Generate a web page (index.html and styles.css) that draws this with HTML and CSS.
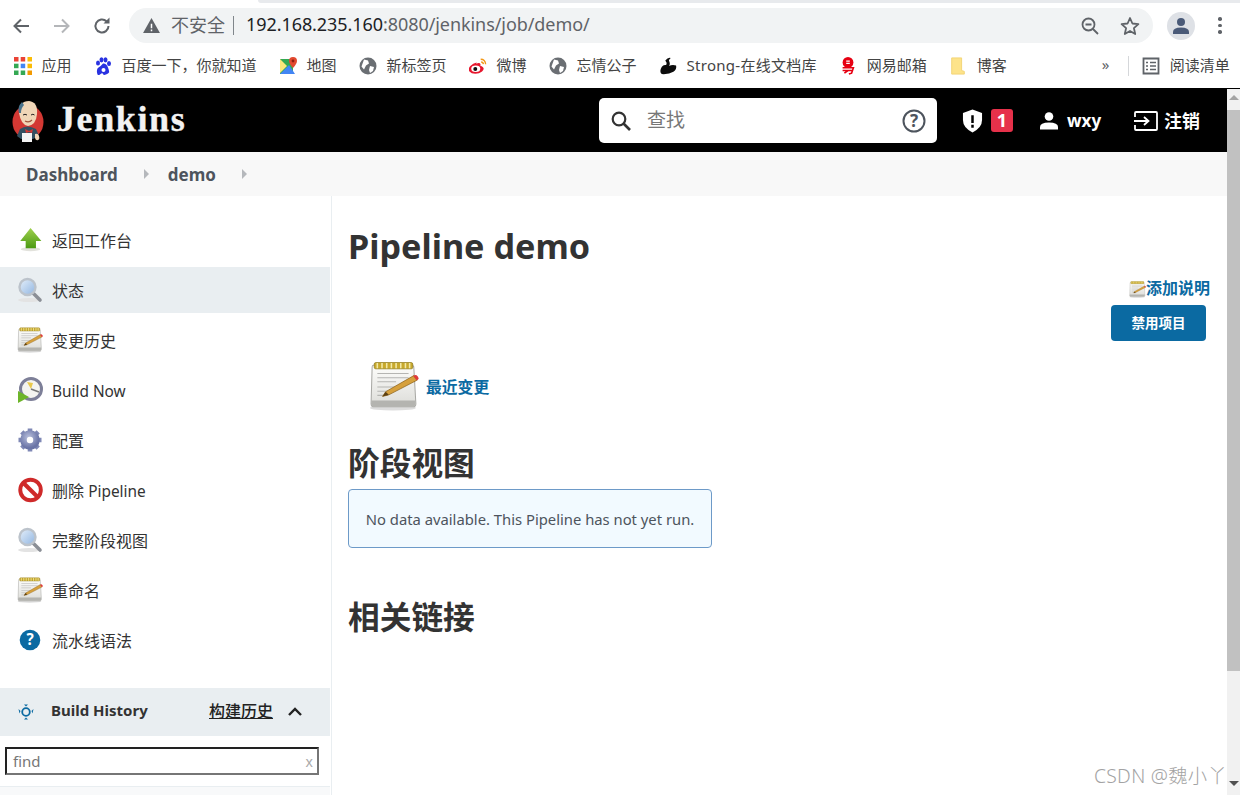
FILE: index.html
```html
<!DOCTYPE html>
<html lang="zh">
<head>
<meta charset="utf-8">
<title>demo [Jenkins]</title>
<link rel="stylesheet" href="styles.css">
</head>
<body>
<svg class="sprite" width="0" height="0" aria-hidden="true">
  <defs>
    <linearGradient id="paper" x1="0" y1="0" x2="0" y2="1"><stop offset="0" stop-color="#fdfdfb"/><stop offset="1" stop-color="#dcdcd8"/></linearGradient>
    <linearGradient id="lens" x1="0" y1="0" x2="1" y2="1"><stop offset="0" stop-color="#e6f0fb"/><stop offset="1" stop-color="#8fb4e0"/></linearGradient>
    <linearGradient id="green" x1="0" y1="0" x2="0" y2="1"><stop offset="0" stop-color="#9fd04e"/><stop offset="1" stop-color="#4b9a12"/></linearGradient>
    <radialGradient id="gear" cx=".4" cy=".3" r=".8"><stop offset="0" stop-color="#b9c0dd"/><stop offset="1" stop-color="#6a74a6"/></radialGradient>
    <symbol id="i-note" viewBox="0 0 48 48">
      <ellipse cx="23" cy="45" rx="22" ry="2.4" fill="#ddd"/>
      <path d="M4 4h37q2 0 2 2l2 35q0 3-3 3H5q-3 0-3-3L3 6q0-2 1-2z" fill="url(#paper)" stroke="#a9a9a5" stroke-width="1"/>
      <path d="M2.5 38h42v3q0 3-3 3H5q-3 0-3-3z" fill="#b4b4b0"/>
      <rect x="5" y="1.500" width="37" height="6" rx="1.500" fill="#c8a92c" stroke="#8f7a1c" stroke-width=".7"/>
      <path d="M8 2v5M12.500 2v5M17 2v5M21.500 2v5M26 2v5M30.500 2v5M35 2v5M39 2v5" stroke="#f2e9a8" stroke-width="1.500"/>
      <path d="M8 12h30M8 16h30M8 20h18M8 25h20M8 29h14M8 33h10" stroke="#b5b5b2" stroke-width="1"/>
      <path d="M13 34l3-4.500L43 14l3 4.500-27 14z" fill="#d6a03c" stroke="#8b6017" stroke-width=".7"/>
      <path d="M42.500 14.300q2.500-1.800 4.300.5t-.800 4z" fill="#df3a3a"/>
      <path d="M13 34l3-4.500 3 3z" fill="#5b3f12"/>
    </symbol>
    <symbol id="i-search" viewBox="0 0 26 26">
      <ellipse cx="12" cy="23" rx="11" ry="2" fill="#e3e3e3"/>
      <path d="M16 16l7 7" stroke="#8b8f96" stroke-width="3.600" stroke-linecap="round"/>
      <circle cx="10.500" cy="10" r="8" fill="url(#lens)" stroke="#bcc3cb" stroke-width="2.400"/>
    </symbol>
    <symbol id="i-pw" viewBox="0 0 24 24">
      <ellipse cx="12.500" cy="20.500" rx="9" ry="1.800" fill="#e2e2dc"/>
      <path d="M12.500 1L22.500 13H17.500V19.500H8V13H3z" fill="url(#green)"/>
    </symbol>
    <symbol id="i-globe" viewBox="0 0 18 18">
      <circle cx="9" cy="9" r="8.500" fill="#6a6e73"/>
      <path d="M5 2.500l4 1 1 3-3 2-2 4-2.500-3zM11 9l4 1-1 4-3 2-1-3z" fill="#fff"/>
    </symbol>
  </defs>
</svg>

<div class="page">
  <header class="browser">
    <div class="tabstrip"></div>
    <div class="toolbar">
      <svg class="tool" viewBox="0 0 18 18"><path d="M17 9H3M9 2.500L2.500 9 9 15.500" fill="none" stroke="#5f6368" stroke-width="2"/></svg>
      <svg class="tool tool-off" viewBox="0 0 18 18"><path d="M1 9h14M9 2.500L15.500 9 9 15.500" fill="none" stroke="#b4b6b9" stroke-width="2"/></svg>
      <svg class="tool" viewBox="0 0 18 18"><path d="M15.500 9a6.500 6.500 0 1 1-2-4.700" fill="none" stroke="#5f6368" stroke-width="2"/><path d="M10.500 6.500H16.500V.5z" fill="#5f6368"/></svg>
      <div class="omnibox">
        <svg class="warn" viewBox="0 0 18 16"><path d="M9 0L18 16H0z" fill="#5f6368"/><path d="M9 6v5M9 12.300v1.700" stroke="#fff" stroke-width="1.600"/></svg>
        <span class="insecure">不安全</span>
        <span class="pipe"></span>
        <span class="url"><b>192.168.235.160</b>:8080/jenkins/job/demo/</span>
        <svg class="omni-zoom" viewBox="0 0 18 18"><circle cx="7.500" cy="7.500" r="6" fill="none" stroke="#5f6368" stroke-width="1.800"/><path d="M12 12l5 5M4.500 7.500h6" stroke="#5f6368" stroke-width="1.800"/></svg>
        <svg class="omni-star" viewBox="0 0 20 20"><path d="M10 2l2.400 5.500 6 .6-4.500 4 1.300 5.900L10 15l-5.200 3 1.300-5.900-4.500-4 6-.6z" fill="none" stroke="#5f6368" stroke-width="1.800" stroke-linejoin="round"/></svg>
      </div>
      <div class="avatar"><svg viewBox="0 0 18 18" width="18" height="18"><circle cx="9" cy="5" r="4" fill="#4a5a78"/><path d="M1 17v-2q0-4.500 8-4.500t8 4.500v2z" fill="#4a5a78"/></svg></div>
      <div class="kebab"><i></i><i></i><i></i></div>
    </div>
    <nav class="bookmarks">
      <a class="bm"><svg class="bm-i" viewBox="0 0 18 18"><g><rect x="0" y="0" width="4.500" height="4.500" fill="#ea4335"/><rect x="6.700" y="0" width="4.500" height="4.500" fill="#ea4335"/><rect x="13.500" y="0" width="4.500" height="4.500" fill="#fbbc05"/><rect x="0" y="6.700" width="4.500" height="4.500" fill="#34a853"/><rect x="6.700" y="6.700" width="4.500" height="4.500" fill="#4285f4"/><rect x="13.500" y="6.700" width="4.500" height="4.500" fill="#fbbc05"/><rect x="0" y="13.500" width="4.500" height="4.500" fill="#34a853"/><rect x="6.700" y="13.500" width="4.500" height="4.500" fill="#34a853"/><rect x="13.500" y="13.500" width="4.500" height="4.500" fill="#f29900"/></g></svg><span>应用</span></a>
      <a class="bm"><svg class="bm-i" viewBox="0 0 18 18"><g fill="#2932e1"><ellipse cx="4" cy="6" rx="2" ry="2.600"/><ellipse cx="7.500" cy="2.800" rx="2" ry="2.600"/><ellipse cx="11.500" cy="2.800" rx="2" ry="2.600"/><ellipse cx="15" cy="6.500" rx="2" ry="2.600"/><path d="M9.500 6.500q3 0 4.500 4t1 5-3 2-3-.5-3 .5-3-2 1.500-5 4.500-4z"/></g><circle cx="9.500" cy="13" r="2" fill="#fff"/></svg><span>百度一下，你就知道</span></a>
      <a class="bm"><svg class="bm-i" viewBox="0 0 18 18"><path d="M1 2h13v15H1z" fill="#34a853"/><path d="M1 17L10 8l6 9z" fill="#4285f4"/><path d="M1 2l7 7-7 7z" fill="#fbe67a"/><path d="M14 0a4 4 0 0 1 4 4q0 2.500-4 7-4-4.500-4-7a4 4 0 0 1 4-4z" fill="#e2492f"/><circle cx="14" cy="4" r="1.400" fill="#8e1f10"/></svg><span>地图</span></a>
      <a class="bm"><svg class="bm-i"><use href="#i-globe"/></svg><span>新标签页</span></a>
      <a class="bm"><svg class="bm-i" viewBox="0 0 20 18"><path d="M8.500 5q-4 .5-7 4t-1 6 6.500 2.500 7.500-2.500 1-4.500-3-1.300q1-2.700-1-3.500-1.200-.5-3.500.8z" fill="#e6162d"/><ellipse cx="7.500" cy="12" rx="5" ry="3.600" fill="#fff"/><circle cx="7" cy="12.300" r="2.200" fill="#111"/><path d="M13 1.500q5 0 5.500 5.500M13.500 4.500q2.200 0 2.500 2.500" fill="none" stroke="#f39817" stroke-width="1.500"/></svg><span>微博</span></a>
      <a class="bm"><svg class="bm-i"><use href="#i-globe"/></svg><span>忘情公子</span></a>
      <a class="bm"><svg class="bm-i" viewBox="0 0 20 20"><path d="M3 19q-3-3 0-8 2-3 5-2 1-3-1-5 3-4 6-3-2 2-2 3 2 4 0 6 4-2 8-.5 1 4-3 7-5 3-13 2.500z" fill="#0c0c0c"/></svg><span class="bm-wide">Strong-在线文档库</span></a>
      <a class="bm"><svg class="bm-i" viewBox="0 0 18 20"><circle cx="9" cy="6" r="6" fill="#e60012"/><path d="M7 4.500h4M7 7h4" stroke="#fff" stroke-width="1.300"/><path d="M3 12h12l-2 6-3 1M3 15h11M5 18l4-3" fill="none" stroke="#e60012" stroke-width="1.800"/></svg><span>网易邮箱</span></a>
      <a class="bm"><svg class="bm-i" viewBox="0 0 18 20"><path d="M2 1h11v14l3 1v3H2z" fill="#fde38a" stroke="#f2d271" stroke-width="1"/></svg><span>博客</span></a>
      <span class="bm-more">»</span>
      <span class="bm-sep"></span>
      <a class="bm bm-read"><svg class="bm-i" viewBox="0 0 18 18"><path d="M1.500 1.500h15v15h-15z" fill="none" stroke="#5f6368" stroke-width="1.800"/><path d="M4 5.500h2M8 5.500h6M4 9h2M8 9h6M4 12.500h2M8 12.500h6" stroke="#5f6368" stroke-width="1.600"/></svg><span>阅读清单</span></a>
    </nav>
  </header>

  <div class="viewport">
    <div class="app">
      <div class="jk-header">
        <a class="jk-brand">
          <svg class="jk-logo" viewBox="0 0 32 44">
            <ellipse cx="16" cy="23" rx="15.500" ry="17" fill="#d33833"/>
            <path d="M8 30q7-5 16 0l3 7-6 3H9l-4-3z" fill="#335061"/>
            <path d="M7 14q0-12 10-12 9 1 8 13-1 11-9 12-7-1-9-13z" fill="#f0d6b7"/>
            <path d="M7 14q-2-6 3-11l2 3q-3 3-3 8z" fill="#49728b"/>
            <path d="M11 16q2-1.500 4 0M19 16q2-1.500 3.500 0" stroke="#231f20" stroke-width="1" fill="none"/>
            <path d="M13 22q4 2 7-1" stroke="#a0563c" stroke-width="1.200" fill="none"/>
            <path d="M13 30l4 2 4-2-1 4-3-1-3 1z" fill="#d33833"/>
            <path d="M10 34h10v9H10z" fill="#f4f4f4"/>
            <path d="M23 35q3-1 4 2t-1 4-3-2z" fill="#f0d6b7"/>
          </svg>
          <span class="jk-name">Jenkins</span>
        </a>
        <form class="jk-search">
          <svg class="jk-search-i" viewBox="0 0 20 20"><circle cx="8" cy="8" r="6.300" fill="none" stroke="#333" stroke-width="2.200"/><path d="M12.500 12.500l6.500 6.500" stroke="#333" stroke-width="2.600"/></svg>
          <span class="jk-placeholder">查找</span>
          <svg class="jk-help" viewBox="0 0 24 24"><circle cx="12" cy="12" r="10.500" fill="none" stroke="#4d545d" stroke-width="2"/><text x="12" y="17.500" text-anchor="middle" class="jk-help-q">?</text></svg>
        </form>
        <div class="jk-alert">
          <svg class="jk-shield" viewBox="0 0 22 24"><path d="M11 0l10 3.500V11q0 8-10 13Q1 19 1 11V3.500z" fill="#fff"/><path d="M11 6v8M11 16v3" stroke="#000" stroke-width="2.600"/></svg>
          <span class="jk-badge">1</span>
        </div>
        <a class="jk-user">
          <svg class="jk-user-i" viewBox="0 0 18 18"><circle cx="9" cy="4.500" r="4.300" fill="#fff"/><path d="M0 17.500v-2.500q0-4.500 9-4.500t9 4.500v2.500z" fill="#fff"/></svg>
          <span>wxy</span>
        </a>
        <a class="jk-logout">
          <svg class="jk-logout-i" viewBox="0 0 24 20"><path d="M1 6V2q0-1 1-1h20q1 0 1 1v16q0 1-1 1H2q-1 0-1-1v-4" fill="none" stroke="#fff" stroke-width="1.800"/><path d="M0 10h14M10 6l4.500 4-4.500 4" fill="none" stroke="#fff" stroke-width="1.800"/></svg>
          <span class="jk-logout-text">注销</span>
        </a>
      </div>

      <div class="crumbs">
        <a class="crumb">Dashboard</a>
        <span class="caret"></span>
        <a class="crumb">demo</a>
        <span class="caret"></span>
      </div>

      <div class="content">
        <aside class="side">
          <ul class="tasks">
            <li class="task"><svg class="task-i"><use href="#i-pw"/></svg>返回工作台</li>
            <li class="task task-on"><svg class="task-i"><use href="#i-search"/></svg>状态</li>
            <li class="task"><svg class="task-i"><use href="#i-note"/></svg>变更历史</li>
            <li class="task"><svg class="task-i" viewBox="0 0 26 26"><circle cx="14" cy="12" r="10.500" fill="#f4f4f0" stroke="#7d7f98" stroke-width="3"/><path d="M14 12l-4-7 6 1z" fill="#e9c94c"/><path d="M14 12l8 3" stroke="#777" stroke-width="1.600"/><path d="M1 14l11 6-11 6z" fill="#6db52a"/></svg><span class="latin">Build Now</span></li>
            <li class="task"><svg class="task-i" viewBox="0 0 26 26"><path d="M13 1.500v5M13 19.500v5M1.500 13h5M19.500 13h5M4.800 4.800l3.500 3.500M17.700 17.700l3.500 3.500M21.200 4.800l-3.500 3.500M8.300 17.700l-3.500 3.500" stroke="#7f88b5" stroke-width="4.600"/><circle cx="13" cy="13" r="6.500" fill="none" stroke="url(#gear)" stroke-width="6.500"/></svg>配置</li>
            <li class="task"><svg class="task-i" viewBox="0 0 24 24"><circle cx="12.500" cy="12" r="9.500" fill="#fff" stroke="#cf2a2a" stroke-width="3.600"/><path d="M6 5.500l13 13" stroke="#cf2a2a" stroke-width="3.800"/></svg>删除 <span class="latin">Pipeline</span></li>
            <li class="task"><svg class="task-i"><use href="#i-search"/></svg>完整阶段视图</li>
            <li class="task"><svg class="task-i"><use href="#i-note"/></svg>重命名</li>
            <li class="task"><svg class="task-i" viewBox="0 0 24 24"><circle cx="12" cy="12" r="9.500" fill="#0b6aa2"/><text x="12" y="17" text-anchor="middle" class="q-white">?</text></svg>流水线语法</li>
          </ul>
          <div class="history-head">
            <svg class="history-i" viewBox="0 0 18 18"><circle cx="9" cy="9" r="3.800" fill="none" stroke="#0b6aa2" stroke-width="1.800"/><path d="M7 1.500h4L9 3.500zM7 16.500h4L9 14.500zM1.500 6l2 2-1 2.500zM16.500 6l-2 2 1 2.500z" fill="#0b6aa2"/></svg>
            <span class="history-title">Build History</span>
            <a class="history-link">构建历史</a>
            <svg class="history-chev" viewBox="0 0 14 9"><path d="M1 8l6-6 6 6" fill="none" stroke="#222" stroke-width="2.400"/></svg>
          </div>
          <div class="find">
            <span class="find-text">find</span>
            <span class="find-x">x</span>
          </div>
          <div class="history-foot"></div>
        </aside>

        <main class="main">
          <h1 class="title">Pipeline demo</h1>
          <div class="desc-row">
            <svg class="desc-i"><use href="#i-note"/></svg><a class="link">添加说明</a>
          </div>
          <div class="btn-row"><button class="btn" type="button">禁用项目</button></div>
          <div class="recent">
            <svg class="recent-i"><use href="#i-note"/></svg>
            <a class="link recent-link">最近变更</a>
          </div>
          <h2 class="section stage-head">阶段视图</h2>
          <div class="nodata">No data available. This Pipeline has not yet run.</div>
          <h2 class="section related-head">相关链接</h2>
        </main>
      </div>
    </div>

    <div class="scrollbar">
      <span class="arrow arrow-up"></span>
      <span class="thumb"></span>
      <span class="arrow arrow-down"></span>
    </div>
  </div>
  <div class="watermark">CSDN @魏小丫</div>
</div>
</body>
</html>
```

FILE: styles.css
```css
* { box-sizing: border-box; }
html, body { margin: 0; padding: 0; background: #fff; overflow: hidden; }
body { font-family: "Noto Sans", "Noto Sans CJK SC", sans-serif; color: #333; }
a { color: inherit; text-decoration: none; }
ul { list-style: none; margin: 0; padding: 0; }
.sprite { position: absolute; }
.page { position: relative; width: 1240px; height: 795px; display: flex; flex-direction: column; overflow: hidden; }

/* browser chrome */
.browser { height: 89px; flex: none; border-bottom: 1px solid #000; background: #fff; }
.tabstrip { height: 3px; margin-left: 258px; background: #e8eaed; border-bottom-left-radius: 3px; }
.toolbar { height: 49px; padding: 5px 0 9px 12px; display: flex; align-items: center; }
.tool { width: 18px; height: 18px; margin-right: 22.500px; flex: none; }
.omnibox { width: 1024px; height: 35px; margin-left: -4.500px; padding: 0 13px 0 14px; border-radius: 18px; background: #f1f3f4; display: flex; align-items: center; flex: none; }
.warn { width: 17px; height: 15px; flex: none; }
.insecure { margin: 0 0 4px 11px; font-size: 18px; color: #5f6368; }
.pipe { width: 1px; height: 19px; background: #80868b; margin: 0 12px 0 8px; }
.url { margin-bottom: 4px; font-size: 18px; letter-spacing: -.07px; color: #5f6368; white-space: nowrap; flex: 1; }
.url b { font-weight: 400; color: #202124; }
.omni-zoom { width: 18px; height: 18px; }
.omni-star { width: 20px; height: 20px; margin-left: 21px; margin-right: 0; }
.avatar { width: 28px; height: 28px; margin-left: 14px; border-radius: 50%; background: #dee1e6; display: flex; align-items: center; justify-content: center; flex: none; }
.kebab { margin-left: 23px; display: flex; flex-direction: column; gap: 3px; }
.kebab i { width: 3.500px; height: 3.500px; border-radius: 50%; background: #5f6368; display: block; }
.bookmarks { height: 36px; padding: 0 0 8px 13.500px; display: flex; align-items: center; font-size: 15px; color: #444; white-space: nowrap; }
.bm { display: flex; align-items: center; margin-right: 22px; flex: none; line-height: 20px; }
.bm span { margin-bottom: 2px; }
.bm .bm-wide { letter-spacing: .27px; }
.bm-i { width: 18px; height: 18px; margin-right: 10px; flex: none; }
.bm-more { margin-left: 73px; font-size: 15px; width: 10px; color: #5f6368; margin-bottom: 4px; }
.bm-sep { width: 1px; height: 20px; background: #d5d7da; margin: 0 13px 0 16px; }
.bm-read { margin-right: 0; }

/* layout */
.viewport { flex: 1; display: flex; min-height: 0; }
.app { width: 1227px; flex: none; display: flex; flex-direction: column; }
.scrollbar { width: 13px; flex: none; background: #f1f1f1; display: flex; flex-direction: column; align-items: center; padding-top: 6px; }
.arrow { width: 0; height: 0; border-left: 5px solid transparent; border-right: 5px solid transparent; flex: none; }
.arrow-up { border-bottom: 5px solid #a3a3a3; }
.arrow-down { border-top: 5px solid #505050; margin-top: 110px; }
.thumb { width: 13px; height: 561px; background: #c1c1c1; margin-top: 10px; flex: none; }

/* jenkins header */
.jk-header { height: 63px; flex: none; background: #000; display: flex; align-items: center; padding-left: 12px; color: #fff; }
.jk-brand { display: flex; align-items: center; width: 587px; flex: none; }
.jk-logo { width: 32px; height: 44px; flex: none; }
.jk-name { margin: 0 0 3px 13px; font-family: "Liberation Serif", serif; font-weight: 700; font-size: 36px; letter-spacing: 1.600px; -webkit-text-stroke: .4px #f2f2f2; color: #f2f2f2; }
.jk-search { width: 338px; height: 45px; flex: none; background: #fff; border-radius: 5px; display: flex; align-items: center; padding: 0 11px 0 12px; }
.jk-search-i { width: 20px; height: 20px; flex: none; }
.jk-placeholder { margin: 0 0 4px 16px; flex: 1; font-size: 19px; color: #777; }
.jk-help { width: 24px; height: 24px; flex: none; }
.jk-help-q { font-size: 17px; font-weight: 700; fill: #4d545d; }
.jk-alert { margin-left: 25px; display: flex; align-items: center; gap: 8px; flex: none; }
.jk-shield { width: 21px; height: 24px; }
.jk-badge { width: 22px; height: 23px; border-radius: 3px; background: #e6314a; font-size: 18px; font-weight: 700; line-height: 23px; text-align: center; }
.jk-user { margin-left: 27px; display: flex; align-items: center; gap: 9px; font-size: 17px; font-weight: 700; flex: none; }
.jk-user-i { width: 18px; height: 18px; }
.jk-logout { margin-left: 33px; display: flex; align-items: center; gap: 6px; font-size: 18px; font-weight: 700; flex: none; }
.jk-logout-text { margin-bottom: 2px; }
.jk-logout-i { width: 24px; height: 20px; }

/* breadcrumbs */
.crumbs { height: 44px; flex: none; background: #f8f8f8; display: flex; align-items: center; padding-left: 26px; color: #4d545d; font-size: 17px; font-weight: 700; }
.crumb { flex: none; }
.caret { width: 0; height: 0; border-left: 5px solid #b5b8bc; border-top: 5px solid transparent; border-bottom: 5px solid transparent; margin: 0 19px 0 26px; }

/* sidebar */
.content { flex: 1; display: flex; min-height: 0; }
.side { width: 332px; flex: none; border-right: 1px solid #e9eef1; padding: 21px 1px 0 0; display: flex; flex-direction: column; }
.task { height: 46px; margin-bottom: 4px; display: flex; align-items: center; padding-left: 17px; font-size: 16px; color: #333; white-space: pre; }
.task-on { background: #e9eef1; }
.task-i { width: 26px; height: 26px; margin-right: 9px; flex: none; }
.latin { font-size: 15.400px; margin-top: 2px; }
.q-white { font-size: 14px; font-weight: 700; fill: #fff; }
.history-head { height: 48px; margin-top: 21px; background: #e9eef1; display: flex; align-items: center; padding-left: 17px; flex: none; }
.history-i { width: 18px; height: 18px; flex: none; margin-bottom: 1px; }
.history-title { margin: 0 0 4px 16px; width: 158px; font-size: 15px; font-weight: 700; color: #333; flex: none; }
.history-link { margin-bottom: 4px; width: 79px; font-size: 16px; font-weight: 500; color: #222; text-decoration: underline; flex: none; }
.history-chev { width: 14px; height: 9px; flex: none; margin-bottom: 1px; }
.find { width: 314px; height: 28px; margin: 11px 0 0 5px; border: 2px solid; border-color: #222 #767676 #767676 #222; display: flex; align-items: center; justify-content: space-between; padding: 0 4px 0 6px; font-size: 15px; background: #fff; flex: none; }
.find-text { color: #777; }
.find-x { color: #aaa; font-size: 14px; }
.history-foot { height: 10px; margin-top: 11px; border-top: 1px solid #e9eef1; background: #f8f9fa; flex: none; }

/* main */
.main { flex: 1; min-width: 0; padding: 28px 17px 0 17px; }
.title { margin: 0 0 0 -1px; font-size: 34.200px; line-height: 44px; font-weight: 700; color: #333; }
.desc-row { margin-top: 9px; height: 22px; display: flex; justify-content: flex-end; align-items: center; }
.desc-i { width: 17px; height: 17px; margin-top: 3px; flex: none; }
.link { color: #0b6aa2; font-weight: 700; font-size: 16px; line-height: 22px; }
.btn-row { margin-top: 6px; display: flex; justify-content: flex-end; padding-right: 4px; }
.btn { width: 95px; height: 36px; border: 0; border-radius: 4px; background: #0b6aa2; color: #fff; font: 700 13.500px "Noto Sans", "Noto Sans CJK SC", sans-serif; padding: 0 0 2px; }
.recent { margin: 20px 0 0 20px; height: 50px; display: flex; align-items: center; }
.recent-i { width: 50px; height: 50px; flex: none; }
.recent-link { margin: 2px 0 0 7px; font-size: 15.800px; }
.section { margin: 0 0 0 -1px; font-size: 31.700px; line-height: 40px; font-weight: 700; color: #333; }
.stage-head { margin-top: 32px; }
.nodata { margin: 6px 0 0 -1px; width: 364px; height: 59px; background: #f2faff; border: 1px solid #6d9ac8; border-radius: 4px; display: flex; align-items: center; justify-content: center; font-size: 14.800px; color: #4d545d; white-space: nowrap; }
.related-head { margin-top: 49px; }

.watermark { position: absolute; right: 13px; bottom: 6px; font-size: 19.300px; font-weight: 300; color: #a3a3a3; letter-spacing: .3px; white-space: nowrap; }
```
